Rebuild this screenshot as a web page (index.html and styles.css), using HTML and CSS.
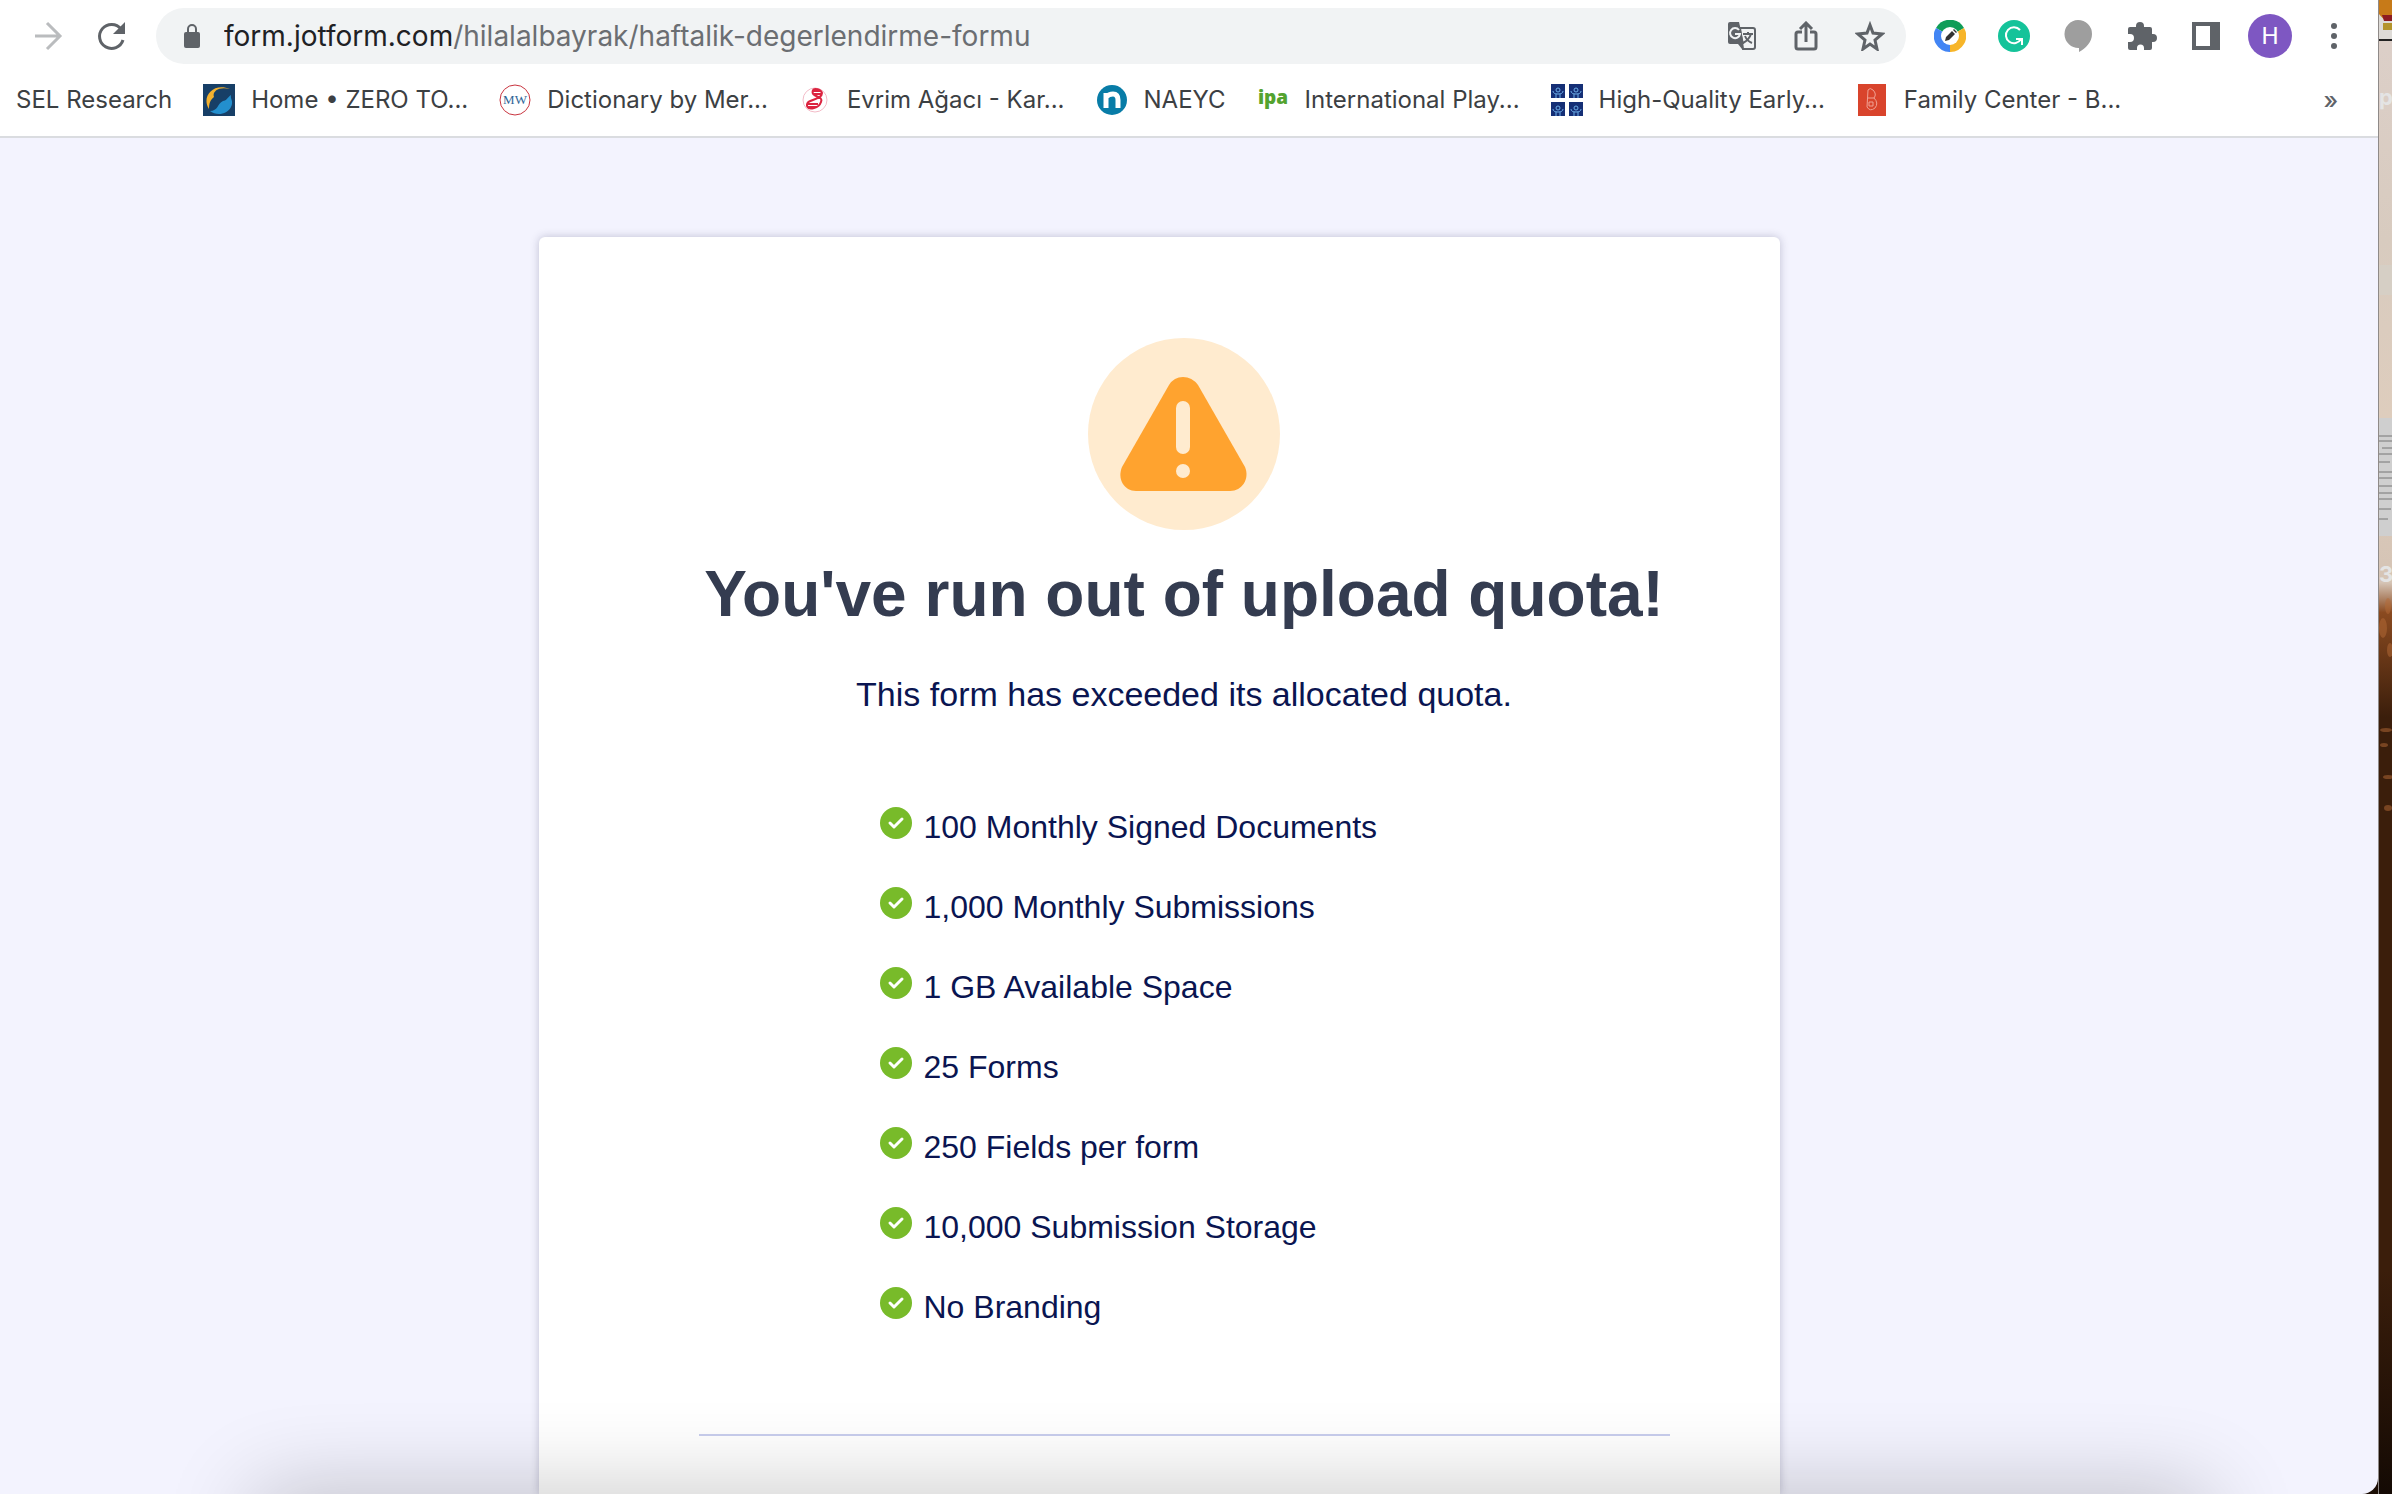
FILE: index.html
```html
<!doctype html>
<html lang="en">
  <head>
    <meta charset="UTF-8" />
    <meta name="viewport" content="width=device-width, initial-scale=1.0" />
    <title>You've run out of upload quota!</title>
    <link rel="stylesheet" href="styles.css" />
  </head>
  <body>
    <div class="browser">
      <header>
        <div class="toolbar">
          <button class="tool" aria-label="Forward" disabled>
            <svg width="32" height="32" viewBox="0 0 32 32" fill="none" stroke="#babcbe" stroke-width="3">
              <path d="M3 16h24M15 3l13 13-13 13" />
            </svg>
          </button>
          <button class="tool" aria-label="Reload">
            <svg width="32" height="32" viewBox="0 0 32 32">
              <path d="M25 9A12 12 0 1 0 27 20" fill="none" stroke="#5f6368" stroke-width="3" />
              <path d="M29 2v12H17z" fill="#5f6368" />
            </svg>
          </button>

          <div class="address-bar">
            <svg width="16" height="26" viewBox="0 0 16 26">
              <rect y="9" width="16" height="16" rx="2" fill="#5f6368" />
              <path d="M4 10V6a4 4 0 0 1 8 0v4" fill="none" stroke="#5f6368" stroke-width="2" />
            </svg>
            <a class="url" href="#"><span class="host">form.jotform.com</span>/hilalalbayrak/haftalik-degerlendirme-formu</a>
            <button class="tool" aria-label="Translate">
              <svg width="30" height="30" viewBox="0 0 30 30">
                <path d="M13 7h13q2 0 2 2v17q0 2-2 2H16z" fill="#f1f3f4" stroke="#5f6368" stroke-width="2" />
                <path d="M3 1h9l5 22H3q-2 0-2-2V3q0-2 2-2z" fill="#5f6368" />
                <path d="M15 23h-4l4 5z" fill="#5f6368" />
                <path d="M12 9a5 5 0 1 0 1 4H8" fill="none" stroke="#f1f3f4" stroke-width="2" />
                <path d="M16 13h10M21 11v2M24 13q-2 6-8 9M18 15q2 5 7 7" fill="none" stroke="#5f6368" stroke-width="2" />
              </svg>
            </button>
            <button class="tool" aria-label="Share">
              <svg width="24" height="30" viewBox="0 0 24 30" fill="none" stroke="#5f6368" stroke-width="3">
                <path d="M8 11H4q-2 0-2 2v13q0 2 2 2h16q2 0 2-2V13q0-2-2-2h-4M12 21V3M6 8l6-6 6 6" />
              </svg>
            </button>
            <button class="tool" aria-label="Bookmark this page">
              <svg width="30" height="30" viewBox="0 0 30 30" fill="none" stroke="#5f6368" stroke-width="3">
                <path d="M15 4l3 8 9 1-7 6 2 9-7-5-7 5 2-9-7-6 9-1z" />
              </svg>
            </button>
          </div>

          <button class="tool" aria-label="Color picker">
            <svg width="32" height="32" viewBox="0 0 32 32">
              <path d="M16 16L2 8a16 16 0 0 1 28 0z" fill="#0f9d58" />
              <path d="M16 16V32A16 16 0 0 1 2 8z" fill="#4285f4" />
              <path d="M16 16L30 8A16 16 0 0 1 16 32z" fill="#f7b529" />
              <circle cx="16" cy="16" r="9" fill="#fff" />
              <path d="M11 21l1-4 6-6 3 3-6 6zM19 10l1-1 3 3-1 1z" fill="#333" />
            </svg>
          </button>
          <button class="tool" aria-label="Grammar check">
            <svg width="32" height="32" viewBox="0 0 32 32">
              <circle cx="16" cy="16" r="16" fill="#15c39a" />
              <path d="M22 10a8 8 0 1 0 1 9h-5M24 25v-6h-3" fill="none" stroke="#fff" stroke-width="2" />
            </svg>
          </button>
          <button class="tool" aria-label="Comments">
            <svg width="28" height="32" viewBox="0 0 28 32">
              <path d="M14 0a14 14 0 0 1 14 14c0 8-6 14-13 18v-4A14 14 0 1 1 14 0z" fill="#9e9e9e" />
            </svg>
          </button>
          <button class="tool" aria-label="Extensions">
            <svg width="30" height="30" viewBox="0 0 30 30">
              <path d="M3 6h6V5a4 4 0 0 1 8 0v1h6q2 0 2 2v5h1a4 4 0 0 1 0 8h-1v6q0 2-2 2h-6v-2a3 3 0 0 0-7 0v2H3q-2 0-2-2v-6h2a4 4 0 0 0 0-8H1V8q0-2 2-2z" fill="#5f6368" />
            </svg>
          </button>
          <button class="tool" aria-label="Side panel">
            <svg width="28" height="28" viewBox="0 0 28 28">
              <path d="M0 0h28v28H0zM4 4v20h14V4z" fill="#5f6368" fill-rule="evenodd" />
            </svg>
          </button>
          <button class="tool" aria-label="Profile"><span class="avatar">H</span></button>
          <button class="tool" aria-label="Menu">
            <svg width="8" height="28" viewBox="0 0 8 28" fill="#5f6368">
              <circle cx="4" cy="4" r="3" />
              <circle cx="4" cy="14" r="3" />
              <circle cx="4" cy="24" r="3" />
            </svg>
          </button>
        </div>

        <nav class="bookmarks">
          <a href="#">SEL Research</a>
          <a href="#">
            <svg width="32" height="32" viewBox="0 0 32 32">
              <rect width="32" height="32" fill="#173f67" />
              <path d="M6 25C-2 13 10-2 27 5 15 2 9 8 11 13c-4 3-5 7-5 12z" fill="#f3b12f" />
              <path d="M7 27c8 0 7-7 13-10 3 0 4-3 8-6-1 4 3 6 0 12-4 8-15 9-21 4z" fill="#238fce" />
            </svg>
            Home • ZERO TO...
          </a>
          <a href="#">
            <svg width="32" height="32" viewBox="0 0 32 32">
              <circle cx="16" cy="16" r="15" fill="#fff" stroke="#c9343f" />
              <text x="16" y="20" class="logo-mw">MW</text>
            </svg>
            Dictionary by Mer...
          </a>
          <a href="#">
            <svg width="32" height="32" viewBox="0 0 32 32" fill="none" stroke="#dc2440">
              <circle cx="16" cy="16" r="12" stroke="#f3bcc8" />
              <path d="M14 6c-3 8 11 5 8 12-2 6-12 9-14 4-1-8 15-5 15-13-1-4-8-5-9-3M14 7h8M15 10h7M9 20h10M9 23h9" stroke-width="2" />
            </svg>
            Evrim Ağacı - Kar...
          </a>
          <a href="#">
            <svg width="32" height="32" viewBox="0 0 32 32">
              <circle cx="16" cy="16" r="15" fill="#087ca7" />
              <path d="M10 24V9M10 13q3-3 7-3 5 0 5 6v8" fill="none" stroke="#fff" stroke-width="5" />
            </svg>
            NAEYC
          </a>
          <a href="#">
            <svg width="32" height="32" viewBox="0 0 32 32">
              <text x="16" y="20" class="logo-ipa">ipa</text>
            </svg>
            International Play...
          </a>
          <a href="#">
            <svg width="32" height="32" viewBox="0 0 32 32">
              <defs>
                <g id="person">
                  <rect width="14" height="14" fill="#152f76" />
                  <path d="M7 4a2 2 0 1 1 0 4 2 2 0 0 1 0-4M2 7q0 3 5 3t5-3M5 14v-4M9 14v-4" fill="none" stroke="#6daee8" />
                </g>
              </defs>
              <use href="#person" />
              <use href="#person" x="18" />
              <use href="#person" y="18" />
              <use href="#person" x="18" y="18" />
            </svg>
            High-Quality Early...
          </a>
          <a href="#">
            <svg width="32" height="32" viewBox="0 0 32 32">
              <rect x="2" width="28" height="32" fill="#d9442c" />
              <path d="M12 6q2-3 5 0 4 4 1 8 5 5 1 10-5 4-8-1l1-17zM12 14h6M13 18h4v4h-4z" fill="none" stroke="#f0a294" />
            </svg>
            Family Center - B...
          </a>
          <button class="more" aria-label="More bookmarks">»</button>
        </nav>
      </header>

      <main>
        <section class="card">
          <svg class="warning" width="192" height="192" viewBox="0 0 192 192">
            <circle cx="96" cy="96" r="96" fill="#ffebcf" />
            <path d="M81 47q5-8 14-8t15 8l47 82c5 12-3 24-15 24H48c-12 0-19-12-14-24z" fill="#ffa32f" />
            <rect x="88" y="63" width="14" height="53" rx="7" fill="#ffebcf" />
            <circle cx="95" cy="133" r="7" fill="#ffebcf" />
          </svg>
          <h1>You've run out of upload quota!</h1>
          <p>This form has exceeded its allocated quota.</p>
          <svg class="sprite">
            <symbol id="check" viewBox="0 0 32 32">
              <circle cx="16" cy="16" r="16" fill="#78bb2a" />
              <path d="M10 16l4 4 8-8" fill="none" stroke="#fff" stroke-width="3" stroke-linecap="round" stroke-linejoin="round" />
            </symbol>
          </svg>
          <ul>
            <li><svg width="32" height="32"><use href="#check" /></svg>100 Monthly Signed Documents</li>
            <li><svg width="32" height="32"><use href="#check" /></svg>1,000 Monthly Submissions</li>
            <li><svg width="32" height="32"><use href="#check" /></svg>1 GB Available Space</li>
            <li><svg width="32" height="32"><use href="#check" /></svg>25 Forms</li>
            <li><svg width="32" height="32"><use href="#check" /></svg>250 Fields per form</li>
            <li><svg width="32" height="32"><use href="#check" /></svg>10,000 Submission Storage</li>
            <li><svg width="32" height="32"><use href="#check" /></svg>No Branding</li>
          </ul>
          <hr />
        </section>
      </main>
      <div class="bottom-shade"></div>
    </div>

    <!-- Strip of desktop next to the window -->
    <aside class="desktop">
      <svg width="14" height="820" viewBox="0 0 14 820">
        <rect width="14" height="40" fill="#dedbd7" />
        <path d="M0 0h14v16q-7 8-14-2z" fill="#c77a18" />
        <path d="M3 15h11v6H5z" fill="#8d1c22" />
        <path d="M4 23h9v7H4z" fill="#b4942c" />
        <path d="M0 39h14v2H0z" fill="#222" />
        <text x="0" y="105" class="desktop-label">p</text>
        <rect y="265" width="14" height="30" fill="#d4d0c7" opacity=".7" />
        <rect y="418" width="14" height="118" fill="#cfcfcf" />
        <path d="M0 436h14M0 441h14M3 448h11M0 454h14M0 462h11M0 472h14M0 478h14M0 486h14M0 493h14M0 499h14M0 509h12M0 519h9" stroke="#777" />
        <text x="0" y="582" class="desktop-label">3</text>
        <g fill="#b56b37" opacity=".5">
          <ellipse cx="9" cy="606" rx="3" ry="8" />
          <ellipse cx="4" cy="628" rx="4" ry="10" />
          <ellipse cx="11" cy="650" rx="3" ry="7" />
          <ellipse cx="7" cy="730" rx="6" ry="2" />
          <ellipse cx="5" cy="745" rx="4" ry="2" />
          <ellipse cx="9" cy="777" rx="5" ry="2" />
          <ellipse cx="9" cy="808" rx="4" ry="3" />
        </g>
      </svg>
    </aside>
  </body>
</html>
```

FILE: styles.css
```css
* {
  box-sizing: border-box;
}
body {
  margin: 0;
  display: flex;
  min-height: 100vh;
  background-color: #1c0e05;
  font-family: "Liberation Sans", Arial, sans-serif;
}
svg {
  display: block;
  flex-shrink: 0;
}
.browser {
  position: relative;
  flex: 1;
  min-width: 0;
  display: flex;
  flex-direction: column;
  overflow: hidden;
  background-color: #f3f3fe;
  border-bottom-right-radius: 16px;
}
header {
  background-color: #fff;
  border-bottom: 2px solid #dadce0;
  font-family: Inter, sans-serif;
}

/* Toolbar */
.toolbar {
  display: flex;
  align-items: center;
  padding: 8px 12px 8px 16px;
}
.tool {
  display: flex;
  flex-shrink: 0;
  align-items: center;
  justify-content: center;
  width: 64px;
  height: 56px;
  padding: 0;
  border: none;
  background-color: transparent;
}
.address-bar {
  flex: 1;
  min-width: 0;
  display: flex;
  align-items: center;
  height: 56px;
  margin: 0 12px;
  padding: 0 4px 0 28px;
  background-color: #f1f3f4;
  border-radius: 28px;
}
.url {
  flex: 1;
  min-width: 0;
  margin-left: 24px;
  overflow: hidden;
  white-space: nowrap;
  font-size: 28px;
  line-height: 40px;
  color: #6b6e72;
  text-decoration: none;
}
.host {
  color: #202124;
}
.avatar {
  width: 44px;
  border-radius: 50%;
  background-color: #7e57c2;
  color: #fff;
  font-family: Roboto, sans-serif;
  font-size: 24px;
  line-height: 44px;
  text-align: center;
}

/* Bookmarks */
.bookmarks {
  display: flex;
  align-items: center;
  gap: 31px;
  height: 64px;
  padding: 0 40px 8px 16px;
}
.bookmarks a {
  display: flex;
  align-items: center;
  gap: 16px;
  white-space: nowrap;
  font-size: 24px;
  line-height: 32px;
  color: #3c4043;
  text-decoration: none;
}
.more {
  margin-left: auto;
  padding: 0;
  border: none;
  background-color: transparent;
  color: #5f6368;
  font-family: Inter, sans-serif;
  font-size: 24px;
  font-weight: 500;
}
.logo-mw {
  fill: #2f6698;
  font-family: "Liberation Serif", serif;
  font-size: 13px;
  text-anchor: middle;
}
.logo-ipa {
  fill: #53a32f;
  font-family: "Open Sans", sans-serif;
  font-size: 19px;
  font-weight: 800;
  text-anchor: middle;
}

/* Form page */
main {
  flex: 1;
  display: flex;
  justify-content: center;
  padding: 99px 60px 0 0;
}
.card {
  width: 1241px;
  padding: 101px 110px 54px 160px;
  background-color: #fff;
  border-radius: 6px 6px 0 0;
  box-shadow: 0 0 8px rgba(40, 40, 80, 0.25);
  color: #0a1551;
}
.warning {
  margin: 0 auto;
}
h1 {
  margin: 24px 0 0;
  color: #343c50;
  font-size: 64px;
  line-height: 80px;
  text-align: center;
}
.card p {
  margin: 40px 0 0;
  font-size: 34px;
  line-height: 40px;
  text-align: center;
}
.sprite {
  position: absolute;
  width: 0;
  height: 0;
}
ul {
  margin: 93px 0 0 181px;
  padding: 0;
  list-style: none;
}
li {
  display: flex;
  gap: 12px;
  height: 80px;
  font-size: 32px;
  line-height: 40px;
}
hr {
  margin: 67px 0 0;
  border: none;
  border-top: 2px solid #c8ceed;
}
.bottom-shade {
  position: absolute;
  top: 100%;
  left: 256px;
  right: 170px;
  height: 80px;
  box-shadow: 0 0 90px rgba(0, 0, 0, 0.24);
}

/* Desktop */
.desktop {
  width: 14px;
  overflow: hidden;
  border-left: 1px solid #8f8a88;
  background: linear-gradient(#ddd0ca, #d8cbbf 16%, #decdbd 28%, #d5c4b5 39%, #8a4a20 41%, #3b1e0b 48%, #3b1e0b 85%, #140a04);
}
.desktop-label {
  fill: #e4e4e4;
  font-family: Inter, sans-serif;
  font-size: 22px;
  font-weight: bold;
}
```
